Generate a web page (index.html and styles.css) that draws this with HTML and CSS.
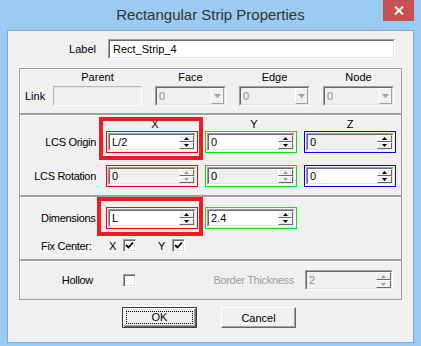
FILE: index.html
```html
<!DOCTYPE html>
<html>
<head lang="en">
    <meta charset="UTF-8">
    <title>Rectangular Strip Properties</title>
    <link rel="stylesheet" href="styles.css">
</head>
<body>
<div class="window">
    <div class="titlebar">
        <span></span>
        <div class="title">Rectangular Strip Properties</div>
        <div class="close">
            <svg width="10" height="9" viewBox="0 0 10 9"><path d="M1 0.5L9 8.5M9 0.5L1 8.5" stroke="#fff" stroke-width="2"/></svg>
        </div>
    </div>
    <div class="client">
        <div class="label-row">
            <span class="label-top">Label</span>
            <div class="edit edit-label"><div class="edit-in"><span class="val">Rect_Strip_4</span></div></div>
        </div>

        <!-- link -->
        <div class="group group-link">
            <span></span>
            <span class="head">Parent</span>
            <span class="head">Face</span>
            <span class="head">Edge</span>
            <span class="head">Node</span>
            <span class="link-lbl">Link</span>
            <div class="parent-box"></div>
            <div class="edit combo"><div class="edit-in"><span class="val dis">0</span><span class="drop"><svg class="dar" viewBox="0 0 7 4"><polygon points="0,0 7,0 3.5,4"/></svg></span></div></div>
            <div class="edit combo"><div class="edit-in"><span class="val dis">0</span><span class="drop"><svg class="dar" viewBox="0 0 7 4"><polygon points="0,0 7,0 3.5,4"/></svg></span></div></div>
            <div class="edit combo"><div class="edit-in"><span class="val dis">0</span><span class="drop"><svg class="dar" viewBox="0 0 7 4"><polygon points="0,0 7,0 3.5,4"/></svg></span></div></div>
        </div>

        <!-- lcs -->
        <div class="group group-lcs">
            <div class="row head-row">
                <span class="lbl"></span>
                <span class="hd hd-shift">X</span>
                <span class="hd hd-shift">Y</span>
                <span class="hd">Z</span>
            </div>
            <div class="row">
                <span class="lbl">LCS Origin</span>
                <div class="field f-red"><div class="edit"><div class="edit-in"><span class="val">L/2</span><span class="btns"><span><svg class="ar" viewBox="0 0 5 3"><polygon points="0,3 5,3 2.5,0"/></svg></span><span><svg class="ar" viewBox="0 0 5 3"><polygon points="0,0 5,0 2.5,3"/></svg></span></span></div></div></div>
                <div class="field f-green"><div class="edit"><div class="edit-in"><span class="val">0</span><span class="btns"><span><svg class="ar" viewBox="0 0 5 3"><polygon points="0,3 5,3 2.5,0"/></svg></span><span><svg class="ar" viewBox="0 0 5 3"><polygon points="0,0 5,0 2.5,3"/></svg></span></span></div></div></div>
                <div class="field f-blue"><div class="edit ro"><div class="edit-in"><span class="val">0</span><span class="btns"><span><svg class="ar" viewBox="0 0 5 3"><polygon points="0,3 5,3 2.5,0"/></svg></span><span><svg class="ar" viewBox="0 0 5 3"><polygon points="0,0 5,0 2.5,3"/></svg></span></span></div></div></div>
            </div>
            <div class="row row-gap">
                <span class="lbl">LCS Rotation</span>
                <div class="field f-red"><div class="edit ro"><div class="edit-in"><span class="val">0</span><span class="btns off"><span><svg class="ar" viewBox="0 0 5 3"><polygon points="0,3 5,3 2.5,0"/></svg></span><span><svg class="ar" viewBox="0 0 5 3"><polygon points="0,0 5,0 2.5,3"/></svg></span></span></div></div></div>
                <div class="field f-green"><div class="edit ro"><div class="edit-in"><span class="val">0</span><span class="btns off"><span><svg class="ar" viewBox="0 0 5 3"><polygon points="0,3 5,3 2.5,0"/></svg></span><span><svg class="ar" viewBox="0 0 5 3"><polygon points="0,0 5,0 2.5,3"/></svg></span></span></div></div></div>
                <div class="field f-blue"><div class="edit"><div class="edit-in"><span class="val">0</span><span class="btns"><span><svg class="ar" viewBox="0 0 5 3"><polygon points="0,3 5,3 2.5,0"/></svg></span><span><svg class="ar" viewBox="0 0 5 3"><polygon points="0,0 5,0 2.5,3"/></svg></span></span></div></div></div>
            </div>
            <div class="mark mark-origin"></div>
        </div>

        <!-- dimensions -->
        <div class="group group-dim">
            <div class="row">
                <span class="lbl lbl-left">Dimensions</span>
                <div class="field f-red"><div class="edit"><div class="edit-in"><span class="val">L</span><span class="btns"><span><svg class="ar" viewBox="0 0 5 3"><polygon points="0,3 5,3 2.5,0"/></svg></span><span><svg class="ar" viewBox="0 0 5 3"><polygon points="0,0 5,0 2.5,3"/></svg></span></span></div></div></div>
                <div class="field f-green"><div class="edit"><div class="edit-in"><span class="val">2.4</span><span class="btns"><span><svg class="ar" viewBox="0 0 5 3"><polygon points="0,3 5,3 2.5,0"/></svg></span><span><svg class="ar" viewBox="0 0 5 3"><polygon points="0,0 5,0 2.5,3"/></svg></span></span></div></div></div>
            </div>
            <div class="fix-row">
                <span class="lbl lbl-left">Fix Center:</span>
                <span class="ax">X</span>
                <span class="cb"><svg class="chk" viewBox="0 0 11 11"><polyline points="2,5 4.5,7.5 9,2.5" fill="none" stroke="#000" stroke-width="1.8"/></svg></span>
                <span class="ax ax-y">Y</span>
                <span class="cb"><svg class="chk" viewBox="0 0 11 11"><polyline points="2,5 4.5,7.5 9,2.5" fill="none" stroke="#000" stroke-width="1.8"/></svg></span>
            </div>
            <div class="mark mark-dim"></div>
        </div>

        <!-- hollow -->
        <div class="group group-hollow">
            <span class="lbl lbl-hollow">Hollow</span>
            <span class="cb cb-hollow"></span>
            <span class="bt-lbl">Border Thickness</span>
            <div class="edit ro edit-bt"><div class="edit-in"><span class="val dis">2</span><span class="btns off"><span><svg class="ar" viewBox="0 0 5 3"><polygon points="0,3 5,3 2.5,0"/></svg></span><span><svg class="ar" viewBox="0 0 5 3"><polygon points="0,0 5,0 2.5,3"/></svg></span></span></div></div>
        </div>

        <div class="buttons">
            <div class="btn btn-ok"><span class="focus">OK</span></div>
            <div class="btn">Cancel</div>
        </div>
    </div>
</div>
</body>
</html>
```

FILE: styles.css
```css
*{
    margin: 0;
    padding: 0;
    box-sizing: border-box;
}
body{
    font-family: "Liberation Sans", Arial, sans-serif;
    font-size: 11px;
    color: #000;
    background: #9acaf0;
}
.window{
    width: 421px;
    height: 346px;
    background: #9acaf0;
}
.titlebar{
    height: 30px;
    display: grid;
    grid-template-columns: 1fr auto 1fr;
    align-items: start;
}
.title{
    font-size: 15px;
    line-height: 30px;
    color: #333;
}
.close{
    justify-self: end;
    width: 31px;
    height: 21px;
    margin-right: 7px;
    background: #c75050;
    display: flex;
    align-items: center;
    justify-content: center;
}
.client{
    margin: 0 7px;
    height: 313px;
    border: 1px solid #7ca9d6;
    background: #f0f0f0;
    padding: 8px 11px 0 11px;
}

/* edits */
.edit{
    display: flex;
    height: 100%;
    border: 1px solid;
    border-color: #a0a0a0 #fff #fff #a0a0a0;
    background: #fff;
}
.edit.ro{
    background: #f0f0f0;
}
.edit-in{
    flex: 1;
    display: flex;
    border: 1px solid;
    border-color: #696969 #e3e3e3 #e3e3e3 #696969;
    min-width: 0;
}
.val{
    flex: 1;
    padding-left: 2px;
    line-height: 14px;
    white-space: nowrap;
}
.val.dis{
    color: #8d8d8d;
}
.btns{
    width: 15px;
    display: flex;
    flex-direction: column;
}
.btns span{
    flex: 1;
    display: flex;
    align-items: center;
    justify-content: center;
    background: #f0f0f0;
    border: 1px solid;
    border-color: #fff #696969 #696969 #fff;
}
.ar{
    width: 5px;
    height: 3px;
    display: block;
    fill: #000;
}
.btns.off .ar{
    fill: #a0a0a0;
}

.label-row{
    display: flex;
    align-items: center;
    height: 20px;
}
.label-top{
    width: 77px;
    text-align: right;
    margin-right: 12px;
}
.edit-label{
    width: 287px;
}
.edit-label .val{
    padding-left: 3px;
    line-height: 16px;
}

/* groups */
.group{
    position: relative;
    border: 1px solid #a0a0a0;
    box-shadow: inset 1px 1px 0 #fff;
}
.group-link{
    margin-top: 9px;
    padding-top: 1px;
    height: 46px;
    display: grid;
    grid-template-columns: 20px 89px 71px 71px 71px;
    grid-template-rows: 14px 20px;
    column-gap: 13px;
    row-gap: 2px;
}
.head{
    text-align: center;
    line-height: 14px;
}
.link-lbl{
    padding-left: 5px;
    line-height: 20px;
    white-space: nowrap;
}
.parent-box{
    border: 1px solid;
    border-color: #b9b9b9 #fff #fff #b9b9b9;
    box-shadow: inset 1px 1px 0 #e3e3e3;
}
.combo{
    background: #f0f0f0;
}
.combo .val{
    line-height: 16px;
}
.drop{
    width: 13px;
    display: flex;
    align-items: center;
    justify-content: center;
    background: #f0f0f0;
    border: 1px solid;
    border-color: #fff #a0a0a0 #a0a0a0 #fff;
}
.dar{
    width: 7px;
    height: 4px;
    fill: #a0a0a0;
}

.row{
    display: flex;
    align-items: center;
    column-gap: 7px;
    height: 22px;
}
.head-row{
    height: 14px;
}
.row-gap{
    margin-top: 12px;
}
.lbl{
    width: 79px;
    flex-shrink: 0;
    text-align: right;
    padding-right: 3px;
    white-space: nowrap;
    letter-spacing: -0.3px;
}
.lbl-left{
    text-align: left;
    padding: 0 0 0 21px;
}
.hd{
    width: 92px;
    text-align: center;
    line-height: 14px;
}
.hd-shift{
    padding-left: 6px;
}
.group-lcs{
    padding: 2px 0 8px 0;
}
.field{
    width: 92px;
    height: 22px;
    border: 1px solid;
    padding: 1px;
}
.f-red{
    border-color: #ff0000;
}
.f-green{
    border-color: #00e600;
}
.f-blue{
    border-color: #0000ff;
}
.mark{
    position: absolute;
    border: 4px solid #ed1c24;
}
.mark-origin{
    left: 79px;
    top: 2px;
    width: 104px;
    height: 43px;
}
.mark-dim{
    left: 77px;
    top: 0;
    width: 106px;
    height: 39px;
}

.group-dim{
    padding: 10px 0 7px 0;
}
.fix-row{
    display: flex;
    align-items: center;
    height: 13px;
    margin-top: 10px;
}
.ax{
    width: 24px;
    padding-left: 10px;
}
.ax-y{
    width: 36px;
    padding-left: 22px;
}
.cb{
    width: 13px;
    height: 13px;
    display: flex;
    border: 1px solid;
    border-color: #a0a0a0 #fff #fff #a0a0a0;
    background: #fff;
    box-shadow: inset 1px 1px 0 #696969, inset -1px -1px 0 #e3e3e3;
}
.chk{
    width: 11px;
    height: 11px;
}

.group-hollow{
    display: flex;
    align-items: center;
    padding: 9px 8px 9px 0;
}
.lbl-hollow{
    padding-right: 6px;
}
.cb-hollow{
    margin-left: 24px;
}
.bt-lbl{
    flex: 1;
    text-align: right;
    padding-right: 11px;
    color: #a0a0a0;
    letter-spacing: -0.3px;
}
.edit-bt{
    width: 88px;
    height: 20px;
    flex-shrink: 0;
}
.edit-bt .val{
    line-height: 16px;
}

/* buttons */
.buttons{
    display: flex;
    justify-content: center;
    column-gap: 24px;
    margin-top: 7px;
    padding-right: 3px;
}
.btn{
    width: 75px;
    height: 21px;
    display: flex;
    align-items: center;
    justify-content: center;
    background: #f0f0f0;
    border: 1px solid;
    border-color: #fff #696969 #696969 #fff;
    box-shadow: inset -1px -1px 0 #a0a0a0;
}
.btn-ok{
    border-color: #3c3c3c;
    box-shadow: inset 1px 1px 0 #fff, inset -1px -1px 0 #696969, inset -2px -2px 0 #a0a0a0;
}
.focus{
    width: 67px;
    height: 13px;
    line-height: 11px;
    text-align: center;
    border: 1px dotted #000;
}
```
